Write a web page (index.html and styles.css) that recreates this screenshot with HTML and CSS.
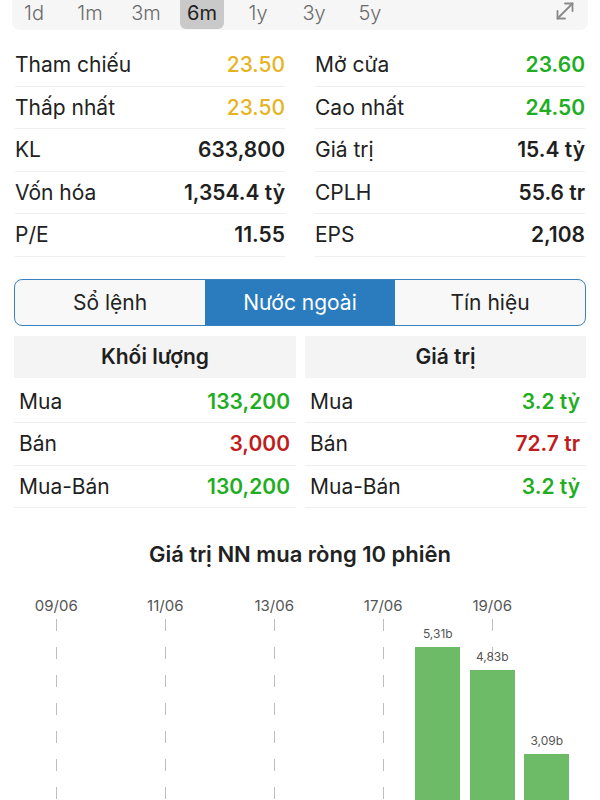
FILE: index.html
```html
<!DOCTYPE html>
<html lang="vi">
<head>
  <meta charset="UTF-8" />
  <title>Nước ngoài</title>
  <meta name="viewport" content="width=device-width, initial-scale=1.0" />
  <link rel="stylesheet" href="styles.css">
</head>
<body>
  <div class="range-bar">
    <span class="range">1d</span>
    <span class="range">1m</span>
    <span class="range">3m</span>
    <span class="range active">6m</span>
    <span class="range">1y</span>
    <span class="range">3y</span>
    <span class="range">5y</span>
    <svg class="expand" width="22" height="22" viewBox="0 0 22 22" fill="none" stroke="#8a8a8a" stroke-width="1.8" stroke-linecap="round" stroke-linejoin="round">
      <path d="M3.5 18.5 L18.5 3.5" />
      <path d="M11 3.5 H18.5 V11" />
      <path d="M3.5 11 V18.5 H11" />
    </svg>
  </div>

  <div class="stats">
    <div class="stat"><span>Tham chiếu</span><b class="yellow">23.50</b></div>
    <div class="stat"><span>Mở cửa</span><b class="green">23.60</b></div>
    <div class="stat"><span>Thấp nhất</span><b class="yellow">23.50</b></div>
    <div class="stat"><span>Cao nhất</span><b class="green">24.50</b></div>
    <div class="stat"><span>KL</span><b>633,800</b></div>
    <div class="stat"><span>Giá trị</span><b>15.4 tỷ</b></div>
    <div class="stat"><span>Vốn hóa</span><b>1,354.4 tỷ</b></div>
    <div class="stat"><span>CPLH</span><b>55.6 tr</b></div>
    <div class="stat"><span>P/E</span><b>11.55</b></div>
    <div class="stat"><span>EPS</span><b>2,108</b></div>
  </div>

  <div class="tabs">
    <div class="tab">Sổ lệnh</div>
    <div class="tab active">Nước ngoài</div>
    <div class="tab">Tín hiệu</div>
  </div>

  <div class="foreign">
    <div class="table">
      <div class="table-head">Khối lượng</div>
      <div class="row"><span>Mua</span><b class="green">133,200</b></div>
      <div class="row"><span>Bán</span><b class="red">3,000</b></div>
      <div class="row"><span>Mua-Bán</span><b class="green">130,200</b></div>
    </div>
    <div class="table">
      <div class="table-head">Giá trị</div>
      <div class="row"><span>Mua</span><b class="green">3.2 tỷ</b></div>
      <div class="row"><span>Bán</span><b class="red">72.7 tr</b></div>
      <div class="row"><span>Mua-Bán</span><b class="green">3.2 tỷ</b></div>
    </div>
  </div>

  <h2 class="chart-title">Giá trị NN mua ròng 10 phiên</h2>

  <div class="chart">
    <div class="chart-dates">
      <span>09/06</span><span></span>
      <span>11/06</span><span></span>
      <span>13/06</span><span></span>
      <span>17/06</span><span></span>
      <span>19/06</span><span></span>
    </div>
    <div class="chart-cols">
      <div class="col tick"></div>
      <div class="col"></div>
      <div class="col tick"></div>
      <div class="col"></div>
      <div class="col tick"></div>
      <div class="col"></div>
      <div class="col tick"></div>
      <div class="col">
        <div class="bar-label">5,31b</div>
        <div class="bar" style="height: 256px"></div>
      </div>
      <div class="col tick">
        <div class="bar-label">4,83b</div>
        <div class="bar" style="height: 233px"></div>
      </div>
      <div class="col">
        <div class="bar-label">3,09b</div>
        <div class="bar" style="height: 149px"></div>
      </div>
    </div>
  </div>
</body>
</html>
```

FILE: styles.css
```css
* {
  margin: 0;
  padding: 0;
  box-sizing: border-box;
}
body {
  font-family: 'Inter', 'Roboto', sans-serif;
  background: #fff;
  color: #1f1f1f;
  font-size: 21px;
}
b {
  font-weight: 600;
}

/* range selector (page is scrolled, top of bar is off screen) */
.range-bar {
  display: flex;
  align-items: flex-start;
  gap: 12px;
  height: 30px;
  margin: 0 12px;
  background: #f6f6f6;
  border-radius: 0 0 8px 8px;
}
.range {
  width: 44px;
  height: 29px;
  text-align: center;
  line-height: 26px;
  color: #6a6a6a;
  font-size: 20px;
  font-weight: 300;
  border-radius: 0 0 6px 6px;
}
.range.active {
  background: #c9c9c9;
  color: #222;
  font-weight: 400;
}
.expand {
  margin-left: auto;
  margin-right: 12px;
}

/* stats grid */
.stats {
  display: grid;
  grid-template-columns: 1fr 1fr;
  column-gap: 30px;
  padding: 0 15px;
  margin-top: 14px;
}
.stat {
  display: flex;
  justify-content: space-between;
  align-items: center;
  height: 42.5px;
  border-bottom: 1px solid #efefef;
}
.stat span {
  color: #222;
}
.yellow {
  color: #e6b422;
  font-weight: 500;
}
.green {
  color: #1fae1f;
}
.red {
  color: #bf1d1d;
}

/* segmented tabs */
.tabs {
  display: flex;
  margin: 22px 14px 0;
  height: 47px;
  border: 1.5px solid #3a82bf;
  border-radius: 8px;
  overflow: hidden;
  background: #f8f8f8;
}
.tab {
  flex: 1;
  display: flex;
  align-items: center;
  justify-content: center;
  color: #222;
}
.tab.active {
  background: #2a7cbe;
  color: #fff;
}

/* foreign trading tables */
.foreign {
  display: grid;
  grid-template-columns: 282px 281px;
  column-gap: 9px;
  padding: 0 14px;
  margin-top: 10px;
}
.table-head {
  height: 42px;
  background: #f4f4f4;
  display: flex;
  align-items: center;
  justify-content: center;
  font-weight: 600;
  margin-bottom: 3px;
}
.row {
  display: flex;
  justify-content: space-between;
  align-items: center;
  height: 42.5px;
  padding: 0 6px 0 5px;
  border-bottom: 1px solid #efefef;
}

/* chart */
.chart-title {
  font-size: 22px;
  font-weight: 600;
  text-align: center;
  margin-top: 33px;
  color: #222;
}
.chart {
  padding-left: 29px;
  margin-top: 29px;
}
.chart-dates,
.chart-cols {
  display: grid;
  grid-template-columns: repeat(10, 54.5px);
}
.chart-dates span {
  font-size: 15px;
  color: #555;
  text-align: center;
  white-space: nowrap;
  height: 22px;
}
.col {
  height: 285px;
  display: flex;
  flex-direction: column;
  justify-content: flex-end;
  align-items: center;
}
.col.tick {
  background: linear-gradient(#bdbdbd 12px, transparent 12px) center 1px / 1px 28px repeat-y;
}
.bar-label {
  font-size: 12px;
  color: #555;
  margin-bottom: 6px;
}
.bar {
  width: 45px;
  background: #6dbb67;
}
```
